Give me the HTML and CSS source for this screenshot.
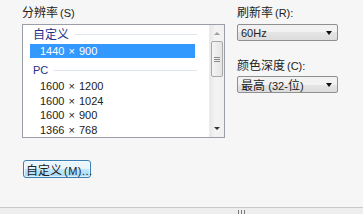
FILE: index.html
```html
<!doctype html>
<html lang="zh-CN">
  <head>
    <meta charset="UTF-8" />
    <meta name="viewport" content="width=device-width, initial-scale=1.0" />
    <title>显示设置</title>
    <link rel="stylesheet" href="styles.css">
  </head>
  <body>
    <div class="page">
      <div class="left_col">
        <div class="field_label">分辨率<span class="key">(S)</span></div>
        <div class="listbox">
          <div class="list_items">
            <div class="group_header"><span>自定义</span><i class="group_line"></i></div>
            <div class="list_row selected">1440 × 900</div>
            <div class="group_header pc"><span class="latin">PC</span><i class="group_line"></i></div>
            <div class="list_row">1600 × 1200</div>
            <div class="list_row">1600 × 1024</div>
            <div class="list_row">1600 × 900</div>
            <div class="list_row">1366 × 768</div>
          </div>
          <div class="scrollbar">
            <div class="arrow_up"></div>
            <div class="thumb"><i></i><i></i><i></i></div>
            <div class="track"></div>
            <div class="arrow_down"></div>
          </div>
        </div>
        <button class="custom_btn">自定义<span class="key">(M)...</span></button>
      </div>

      <div class="right_col">
        <div class="field_label">刷新率<span class="key">(R):</span></div>
        <div class="combo">
          <span class="latin">60Hz</span>
          <i class="combo_arrow"></i>
        </div>
        <div class="field_label second">颜色深度<span class="key">(C):</span></div>
        <div class="combo">
          <span>最高 <span class="latin">(32-</span>位<span class="latin">)</span></span>
          <i class="combo_arrow"></i>
        </div>
      </div>
    </div>
    <div class="footer">
      <div class="grip"><i></i><i></i><i></i></div>
    </div>
  </body>
</html>
```

FILE: styles.css
```css
html {
  font-family: "Liberation Sans", "Noto Sans CJK SC", sans-serif;
  font-size: 12px;
}
body {
  margin: 0;
  background-color: #f6f6f6;
  color: #222222;
  width: 363px;
  height: 214px;
  overflow: hidden;
}

/* latin text is drawn a size smaller, like the half-width glyphs of the dialog font */
.key,
.latin {
  font-size: 11px;
}
.key {
  margin-left: 2px;
}

.page {
  height: 207px;
  display: flex;
  flex-direction: row;
  padding: 6px 0 0 22px;
  box-sizing: border-box;
}

.field_label {
  height: 14px;
  line-height: 14px;
  white-space: nowrap;
}
.field_label.second {
  margin-top: 17px;
  height: 16px;
  line-height: 16px;
}

/* LIST */
.left_col {
  width: 203px;
  display: flex;
  flex-direction: column;
}
.listbox {
  margin-top: 4px;
  height: 114px;
  border: 1px solid #9a9ea6;
  background-color: #ffffff;
  display: flex;
  flex-direction: row;
  box-sizing: border-box;
}
.list_items {
  flex: 1;
  display: flex;
  flex-direction: column;
  padding-left: 7px;
}
.group_header {
  height: 18px;
  display: flex;
  align-items: center;
  gap: 6px;
  padding-left: 3px;
  color: #1e3287;
  width: 167px;
  box-sizing: border-box;
}
.group_header.pc {
  margin-top: 3px;
}
.group_line {
  flex: 1;
  height: 1px;
  background-color: #dfe5ee;
  margin-top: 1px;
}
.list_row {
  height: 14.5px;
  line-height: 14.5px;
  padding-left: 10px;
  width: 165px;
  box-sizing: border-box;
  font-size: 11px;
  word-spacing: 1px;
  white-space: nowrap;
}
.list_row.selected {
  margin-top: 2px;
  height: 14px;
  line-height: 14px;
  background-color: #3399ff;
  color: #ffffff;
}
.group_header.pc + .list_row {
  margin-top: 1px;
}

/* SCROLLBAR */
.scrollbar {
  width: 14px;
  display: flex;
  flex-direction: column;
  align-items: center;
  background: linear-gradient(to right, #e8e8e8, #f4f4f4 40%, #f0f0f0);
  border-left: 1px solid #ececec;
}
.arrow_up,
.arrow_down {
  height: 16px;
  width: 100%;
  position: relative;
}
.arrow_up::after,
.arrow_down::after {
  content: "";
  position: absolute;
  left: 4px;
  border-left: 3px solid transparent;
  border-right: 3px solid transparent;
}
.arrow_up::after {
  top: 7px;
  border-bottom: 3px solid #9aa0a6;
}
.arrow_down::after {
  top: 6px;
  border-top: 3px solid #333333;
}
.thumb {
  width: 12px;
  height: 36px;
  box-sizing: border-box;
  border: 1px solid #a8a8a8;
  border-radius: 2px;
  background: linear-gradient(to right, #f4f4f4, #e4e4e4);
  display: flex;
  flex-direction: column;
  align-items: center;
  justify-content: center;
  gap: 1px;
}
.thumb i {
  display: block;
  width: 6px;
  height: 1px;
  background-color: #8a8a8a;
}
.track {
  flex: 1;
}

/* BUTTON */
.custom_btn {
  margin-top: 22px;
  margin-left: 1px;
  width: 68px;
  height: 18px;
  padding: 0 0 0 2px;
  text-align: left;
  font-family: inherit;
  font-size: 12px;
  color: #222222;
  border: 1px solid #3c7fb1;
  border-radius: 3px;
  background: linear-gradient(to bottom, #eaf6fd 45%, #bee6fd 55%, #a7d9f5);
  box-shadow: inset 0 0 0 1px rgba(255, 255, 255, 0.6);
  white-space: nowrap;
}
.custom_btn .key {
  letter-spacing: 0.5px;
}

/* COMBOS */
.right_col {
  margin-left: 12px;
  width: 101px;
  display: flex;
  flex-direction: column;
}
.combo {
  margin-top: 4px;
  height: 17px;
  box-sizing: border-box;
  border: 1px solid #8e8f8f;
  border-radius: 2px;
  background: linear-gradient(to bottom, #f2f2f2 50%, #e5e5e5 50%, #dcdcdc);
  display: flex;
  align-items: center;
  justify-content: space-between;
  padding: 0 5px 0 3px;
  white-space: nowrap;
}
.field_label.second + .combo {
  margin-top: 2px;
}
.combo_arrow {
  width: 0;
  height: 0;
  border-left: 3.5px solid transparent;
  border-right: 3.5px solid transparent;
  border-top: 4px solid #111111;
}

/* FOOTER */
.footer {
  height: 7px;
  border-top: 1px solid #c9c9c9;
  background-color: #eeeeee;
  display: flex;
  justify-content: flex-start;
  padding-left: 238px;
}
.grip {
  display: flex;
  gap: 2px;
  padding-top: 2px;
}
.grip i {
  display: block;
  width: 1px;
  height: 5px;
  background-color: #7a7a7a;
}
```
